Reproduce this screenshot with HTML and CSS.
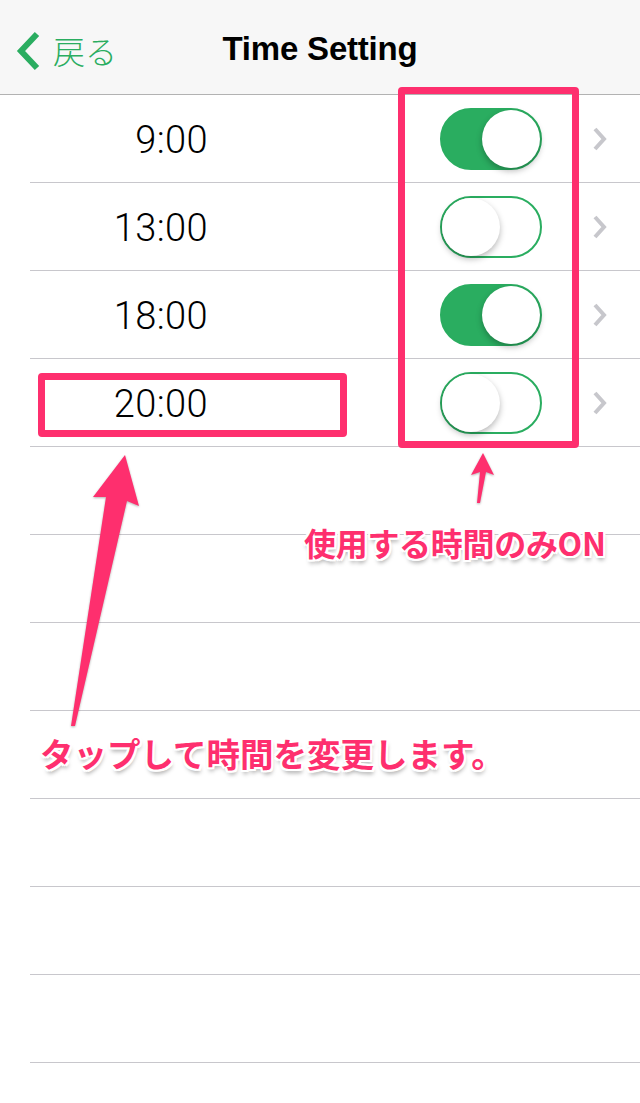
FILE: index.html
```html
<!DOCTYPE html>
<html lang="ja">
  <head>
    <meta charset="UTF-8" />
    <meta name="viewport" content="width=device-width, initial-scale=1.0" />
    <title>Time Setting</title>
    <link rel="stylesheet" href="styles.css">
  </head>
  <body>
    <div class="screen">
      <header class="nav">
        <a class="nav-back" href="#">
          <svg class="back-icon" width="26" height="40" viewBox="0 0 26 40">
            <polyline points="21,3 5,20 21,37" />
          </svg>
          <span>戻る</span>
        </a>
        <h1 class="nav-title">Time Setting</h1>
      </header>

      <ul class="list">
        <li class="row">
          <span class="time">9:00</span>
          <span class="switch on"><span class="knob"></span></span>
          <svg class="chev" width="15" height="26" viewBox="0 0 15 26"><polyline points="3,3 12,13 3,23" /></svg>
        </li>
        <li class="row">
          <span class="time">13:00</span>
          <span class="switch"><span class="knob"></span></span>
          <svg class="chev" width="15" height="26" viewBox="0 0 15 26"><polyline points="3,3 12,13 3,23" /></svg>
        </li>
        <li class="row">
          <span class="time">18:00</span>
          <span class="switch on"><span class="knob"></span></span>
          <svg class="chev" width="15" height="26" viewBox="0 0 15 26"><polyline points="3,3 12,13 3,23" /></svg>
        </li>
        <li class="row">
          <span class="time">20:00</span>
          <span class="switch"><span class="knob"></span></span>
          <svg class="chev" width="15" height="26" viewBox="0 0 15 26"><polyline points="3,3 12,13 3,23" /></svg>
        </li>
        <li class="row"></li>
        <li class="row"></li>
        <li class="row"></li>
        <li class="row"></li>
        <li class="row"></li>
        <li class="row"></li>
        <li class="row"></li>
        <li class="row"></li>
      </ul>

      <!-- annotations drawn over the screenshot -->
      <div class="mark mark-switches"></div>
      <div class="mark mark-time"></div>
      <svg class="arrows" width="640" height="1103" viewBox="0 0 640 1103">
        <path d="M483 453 L494 475 L486 472 L480 503 L477 503 L480 472 L471 475 Z" />
        <path d="M125 455 L139 506 L127 501 L75 726 L71 726 L106 497 L93 497 Z" />
      </svg>
      <p class="note note-on">使用する時間のみON</p>
      <p class="note note-tap">タップして時間を変更します。</p>
    </div>
  </body>
</html>
```

FILE: styles.css
```css
* {
  padding: 0;
  margin: 0;
  box-sizing: border-box;
}
html {
  font-family: 'Liberation Sans', 'Noto Sans CJK JP', sans-serif;
  color: #000;
  background-color: #fff;
}
body {
  background-color: #fff;
}
.screen {
  position: relative;
  width: 640px;
  height: 1103px;
  overflow: hidden;
}

/* nav bar */
.nav {
  height: 95px;
  padding-top: 6px;
  background-color: #f7f7f7;
  border-bottom: 1px solid #b2b2b2;
  display: flex;
  align-items: center;
  position: relative;
}
.nav-back {
  display: flex;
  align-items: center;
  gap: 11px;
  padding-left: 16px;
  color: #2aad60;
  text-decoration: none;
  font-family: 'Noto Sans CJK JP', sans-serif;
  font-weight: 300;
  font-size: 32px;
  line-height: 1;
}
.back-icon {
  display: block;
  margin-top: 2px;
}
.back-icon polyline {
  fill: none;
  stroke: #2aad60;
  stroke-width: 6;
}
.nav-title {
  position: absolute;
  left: 0;
  right: 0;
  top: 32px;
  text-align: center;
  font-size: 33px;
  line-height: 1;
  font-weight: bold;
  letter-spacing: -0.2px;
  pointer-events: none;
}

/* rows */
.list {
  list-style: none;
}
.row {
  height: 88px;
  margin-left: 30px;
  border-bottom: 1px solid #c8c7cc;
  display: flex;
  align-items: center;
}
.time {
  width: 178px;
  padding-top: 3px;
  text-align: right;
  font-family: Roboto, 'Liberation Sans', sans-serif;
  font-weight: 300;
  font-size: 38px;
  letter-spacing: 0.4px;
}
.switch {
  margin-left: 232px;
  width: 102px;
  height: 62px;
  border: 2px solid #2aad60;
  border-radius: 31px;
  background-color: #fff;
  display: flex;
  align-items: center;
  justify-content: flex-start;
}
.switch.on {
  background-color: #2aad60;
  justify-content: flex-end;
}
.knob {
  width: 58px;
  height: 58px;
  border-radius: 50%;
  background-color: #fff;
  box-shadow: 0 3px 6px rgba(0, 0, 0, 0.28);
}
.chev {
  margin-left: 50px;
  display: block;
}
.chev polyline {
  fill: none;
  stroke: #c7c7cc;
  stroke-width: 4;
}

/* annotations */
.mark {
  position: absolute;
  border: 7px solid #fe2f6e;
  border-radius: 4px;
}
.mark-switches {
  left: 398px;
  top: 87px;
  width: 181px;
  height: 361px;
}
.mark-time {
  left: 38px;
  top: 373px;
  width: 309px;
  height: 64px;
}
.arrows {
  position: absolute;
  left: 0;
  top: 0;
  pointer-events: none;
  filter: drop-shadow(0 1px 1px rgba(0, 0, 0, 0.3));
}
.arrows path {
  fill: #fe2f6e;
}
.note {
  position: absolute;
  font-family: 'Noto Sans CJK JP', sans-serif;
  font-weight: bold;
  line-height: 1;
  color: #fe2f6e;
  white-space: nowrap;
  text-shadow:
    2px 0 0 #fff, -2px 0 0 #fff, 0 2px 0 #fff, 0 -2px 0 #fff,
    2px 2px 0 #fff, -2px 2px 0 #fff, 2px -2px 0 #fff, -2px -2px 0 #fff,
    1px 4px 4px rgba(0, 0, 0, 0.35);
}
.note-on {
  left: 304px;
  top: 526px;
  font-size: 32px;
  letter-spacing: -0.3px;
}
.note-tap {
  left: 40px;
  top: 736px;
  font-size: 33.5px;
}
```
